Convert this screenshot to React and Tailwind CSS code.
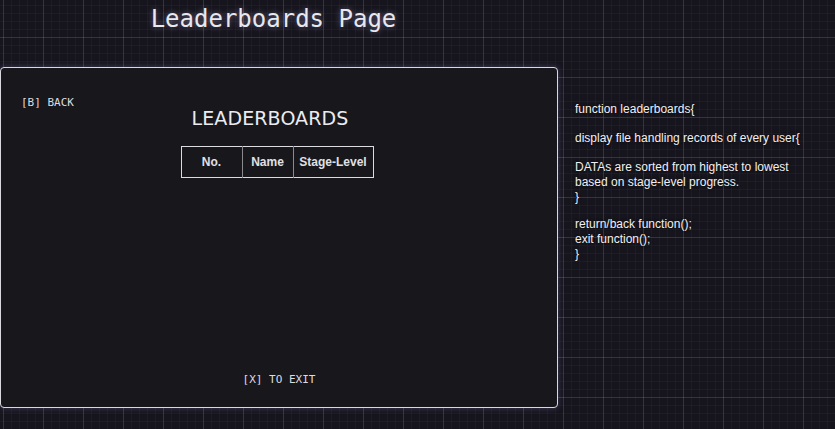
export default function App() {
  return (
    <div className="w-[835px] h-[429px] overflow-hidden bg-[#16141c] bg-[linear-gradient(to_right,rgba(255,255,255,0.11)_1px,transparent_1px),linear-gradient(to_bottom,rgba(255,255,255,0.11)_1px,transparent_1px),linear-gradient(to_right,rgba(255,255,255,0.03)_1px,transparent_1px),linear-gradient(to_bottom,rgba(255,255,255,0.03)_1px,transparent_1px)] bg-[size:40px_40px,40px_40px,8px_8px,8px_8px] bg-[position:3px_-3px,3px_-3px,3px_-3px,3px_-3px]">
      <div className="w-[547px] h-[67px] pt-[3px] text-center">
        <h1 className="text-[24px] leading-[32px] text-[#e8e8ee] font-['DejaVu_Sans_Mono',monospace] [text-shadow:0_0_6px_rgba(200,200,255,0.45)]">
          Leaderboards Page
        </h1>
      </div>
      <div className="flex">
        <div className="w-[558px] h-[341px] bg-[#18171c] border border-[#d8d8de] rounded-[4px] shadow-[0_0_6px_rgba(140,140,220,0.35)] flex flex-col relative">
          <div className="pl-[20px] pt-[28px] text-[11px] leading-[13px] text-[#dcdce0] font-['DejaVu_Sans_Mono',monospace]">
            [B] BACK
          </div>
          <div className="text-center text-[19px] leading-[22px] -mt-[2px] text-[#ececf0] font-['DejaVu_Sans',sans-serif] tracking-[0.1px] pr-[18px]">
            LEADERBOARDS
          </div>
          <div className="flex justify-center mt-[17px] pr-[4px]">
            <table className="border border-[#dcdce0] border-collapse text-[12px] font-bold text-[#e0e0e4] font-['Liberation_Sans',Arial,sans-serif]">
              <tbody>
                <tr className="h-[31px]">
                  <td className="w-[61px] text-center border-r border-[#8a8a8e]">No.</td>
                  <td className="w-[51px] text-center border-r border-[#8a8a8e]">Name</td>
                  <td className="w-[80px] text-center">Stage-Level</td>
                </tr>
              </tbody>
            </table>
          </div>
          <div className="mt-auto mb-[21px] text-center text-[11px] leading-[13px] text-[#dcdce0] font-['DejaVu_Sans_Mono',monospace]">
            [X] TO EXIT
          </div>
        </div>
        <div className="pl-[17px] pt-[35px] text-[12px] leading-[15px] text-[#f0f0f4] font-['Liberation_Sans',Arial,sans-serif] [text-shadow:0_0_3px_rgba(0,0,0,0.6)]">
          <div>function leaderboards{"{"}</div>
          <div className="mt-[14px]">display file handling records of every user{"{"}</div>
          <div className="mt-[14px]">DATAs are sorted from highest to lowest</div>
          <div>based on stage-level progress.</div>
          <div>{"}"}</div>
          <div className="mt-[12px]">return/back function();</div>
          <div>exit function();</div>
          <div>{"}"}</div>
        </div>
      </div>
    </div>
  );
}
